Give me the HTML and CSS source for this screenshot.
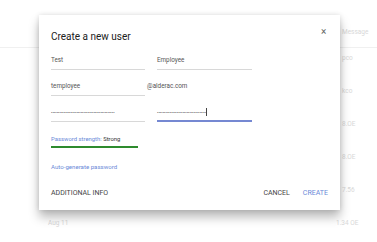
FILE: index.html
```html
<!DOCTYPE html>
<html>
<head>
<meta charset="utf-8">
<link rel="stylesheet" href="styles.css">
</head>
<body>
<div class="page">
  <div class="bg-table">
    <div class="bg-row head"><span class="left"></span><span class="right">Message</span></div>
    <div class="bg-row"><span class="left"></span><span class="right">pco</span></div>
    <div class="bg-row"><span class="left"></span><span class="right">kco</span></div>
    <div class="bg-row"><span class="left"></span><span class="right">8.OE</span></div>
    <div class="bg-row"><span class="left"></span><span class="right">8.OE</span></div>
    <div class="bg-row"><span class="left"></span><span class="right">7.56</span></div>
    <div class="bg-row"><span class="left">Aug 11</span><span class="right r2">1.34 OE</span></div>
  </div>

  <div class="dialog">
    <div class="title">Create a new user</div>
    <div class="close">×</div>
    <div class="form-row">
      <div class="field">Test</div>
      <div class="field wide">Employee</div>
    </div>
    <div class="form-row">
      <div class="field">temployee</div>
      <div class="domain">@alderac.com</div>
    </div>
    <div class="form-row">
      <div class="field"><span class="dots">•••••••••••••••••••••••••••••••••••••••••••••</span></div>
      <div class="field wide focused"><span class="dots">•••••••••••••••••••••••••••••••••••</span><span class="cursor"></span></div>
    </div>
    <div class="strength"><span class="blue">Password strength:</span> <span class="dark">Strong</span></div>
    <div class="strength-bar"></div>
    <div class="link">Auto-generate password</div>
    <div class="footer">
      <span class="btn">ADDITIONAL INFO</span>
      <span class="spacer"></span>
      <span class="btn">CANCEL</span>
      <span class="btn blue">CREATE</span>
    </div>
  </div>
</div>
</body>
</html>
```

FILE: styles.css
```css
* { box-sizing: border-box; }
html, body { margin: 0; padding: 0; background: #fff; }
body { font-family: Roboto, "Liberation Sans", sans-serif; }

.page { position: relative; width: 377px; height: 242px; overflow: hidden; }

.bg-table { padding-top: 16px; }
.bg-row {
  display: flex;
  height: 33px;
  padding-top: 6px;
  font-size: 6.5px;
  line-height: 8px;
  color: #d8d8d8;
}
.bg-row.head { height: 32px; padding-top: 12px; border-bottom: 1px solid #f0f0f0; }
.bg-row .left { width: 342px; padding-left: 48px; }
.bg-row .right.r2 { margin-left: -6px; }

.dialog {
  position: absolute;
  left: 39px;
  top: 15px;
  width: 301px;
  height: 195px;
  background: #fff;
  padding: 16px 12px 0 12px;
  box-shadow: 0 7px 10px rgba(0,0,0,0.28), 0 0 5px rgba(0,0,0,0.12);
  display: flex;
  flex-direction: column;
}
.title {
  font-size: 10px;
  line-height: 12px;
  color: #202020;
  height: 12px;
}
.close {
  position: absolute;
  left: 282px;
  top: 12px;
  font-size: 10px;
  line-height: 10px;
  color: #666;
}
.form-row {
  display: flex;
  align-items: flex-start;
  margin-top: 13px;
  height: 14px;
}
.form-row + .form-row { margin-top: 12px; }
.field {
  width: 94px;
  height: 14px;
  font-size: 6.3px;
  line-height: 9px;
  padding-bottom: 4px;
  border-bottom: 1px solid #d8d8d8;
  color: #555;
  position: relative;
  display: flex;
  align-items: center;
}
.field.wide { width: 95px; margin-left: 12px; }
.field.focused { border-bottom: 2px solid #7588d2; }
.domain {
  font-size: 6.3px;
  line-height: 9px;
  color: #555;
  margin-left: 2px;
}
.dots { font-size: 4.2px; letter-spacing: 0; color: #333; white-space: nowrap; }
.cursor { display: inline-block; width: 1px; height: 8px; background: #444; margin-left: 0; }
.strength {
  margin-top: 13px;
  font-size: 5.9px;
  line-height: 9px;
}
.blue { color: #6a8ad8; }
.dark { color: #333; }
.strength-bar {
  margin-top: 2px;
  width: 87px;
  height: 2px;
  background: #2e8b2e;
}
.link {
  margin-top: 14px;
  font-size: 6.1px;
  line-height: 9px;
  color: #6a8ad8;
}
.footer {
  display: flex;
  align-items: center;
  margin-top: 18px;
  font-size: 7px;
  line-height: 9px;
}
.btn { color: #444; }
.btn.blue { color: #6a8ad8; margin-left: 13px; }
.spacer { flex: 1; }
```
